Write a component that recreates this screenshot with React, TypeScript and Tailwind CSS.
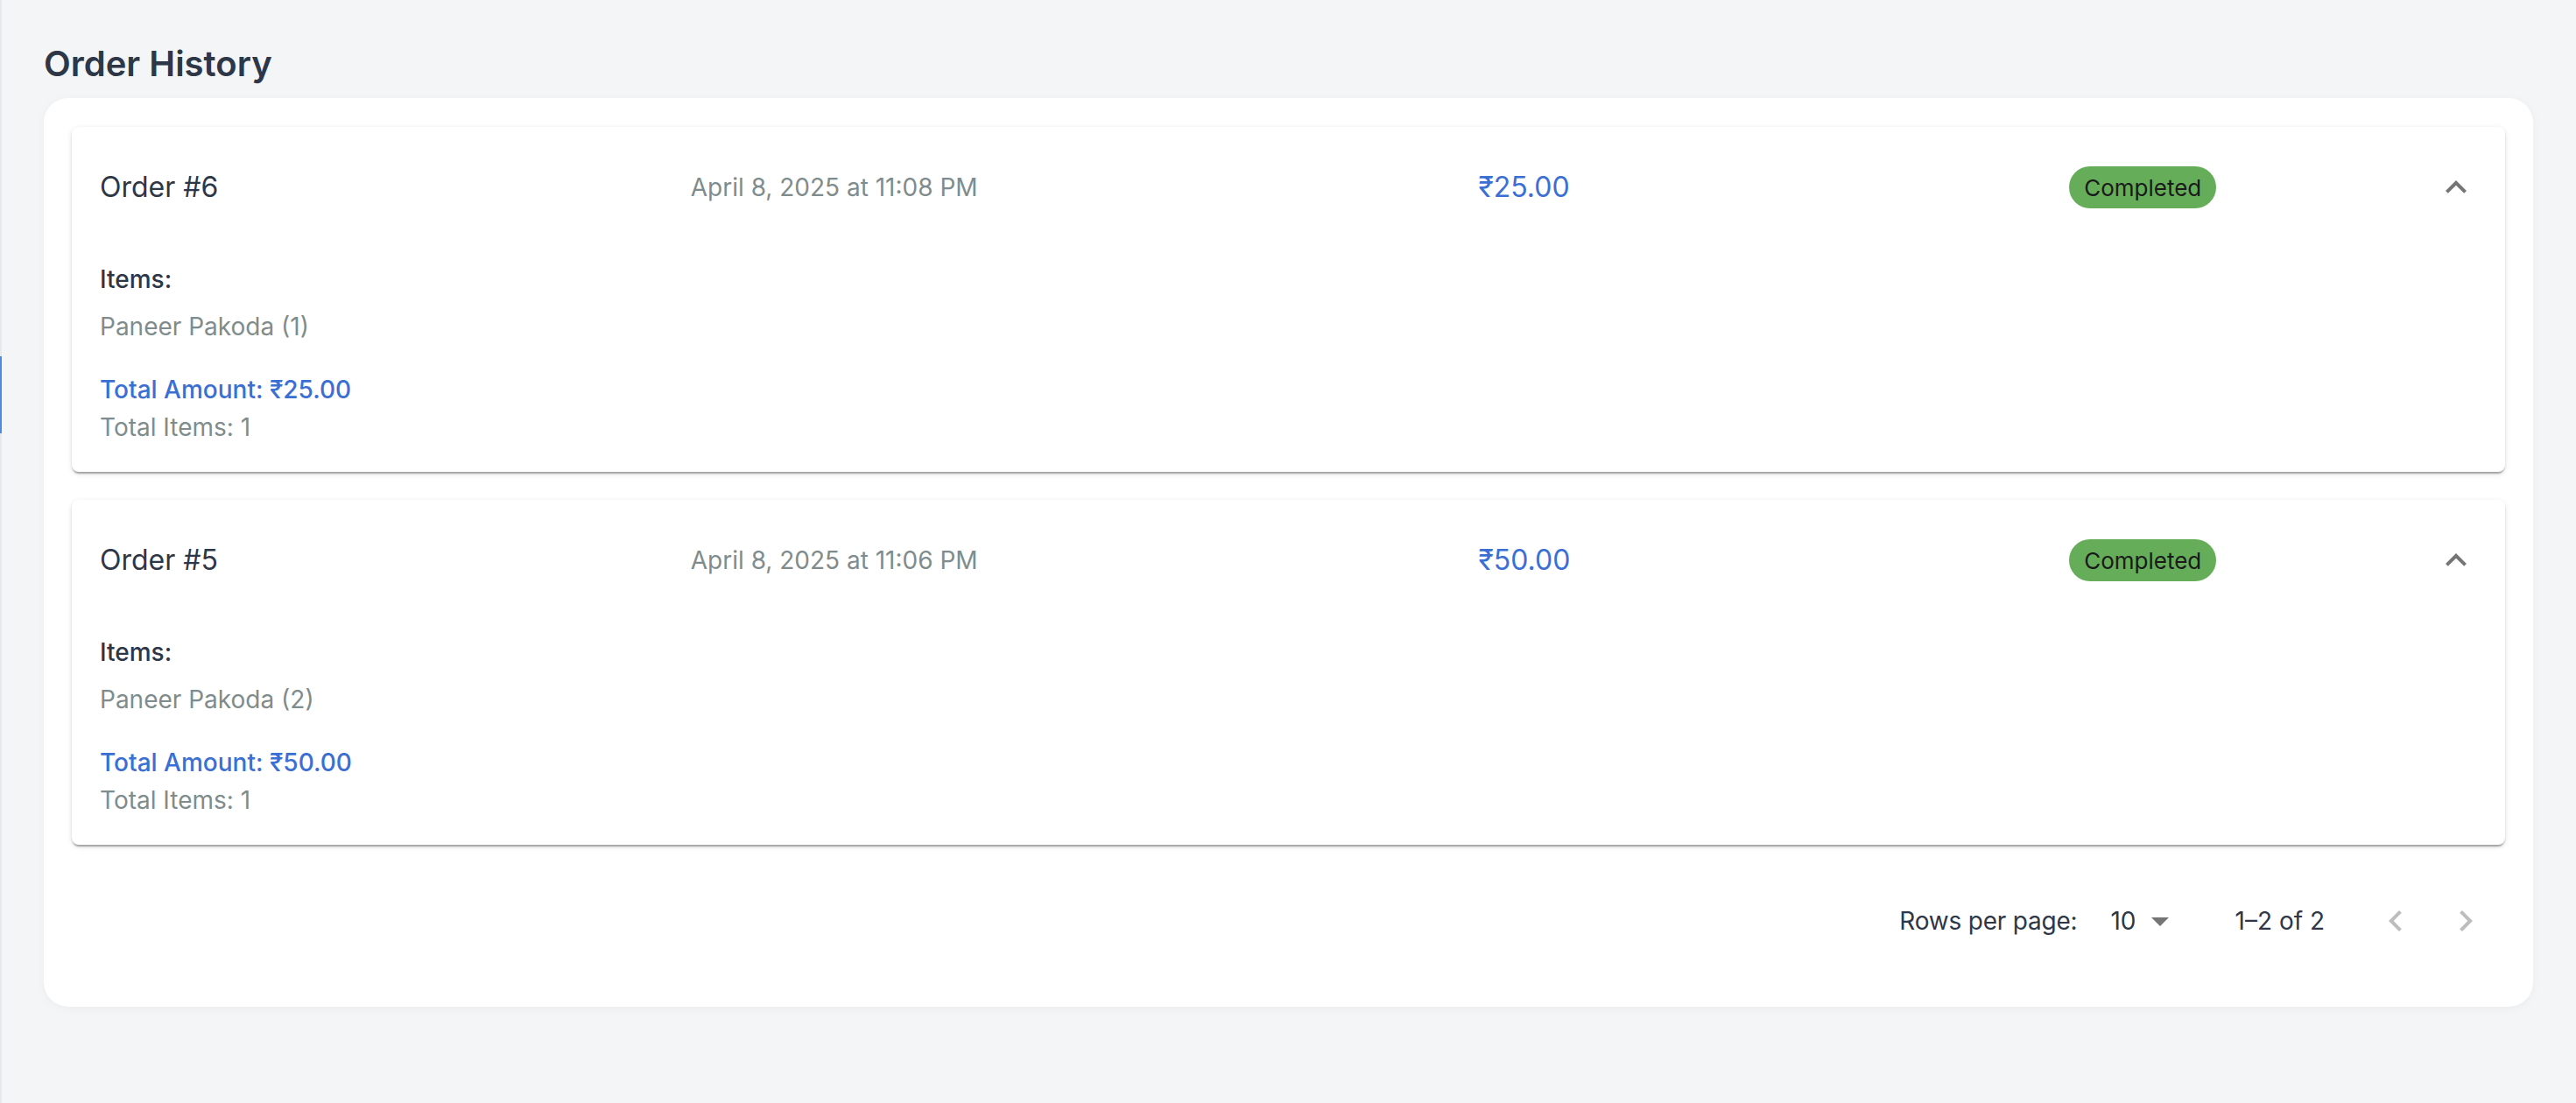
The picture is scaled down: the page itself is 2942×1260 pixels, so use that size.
const font = { fontFamily: 'Inter, "Noto Sans", sans-serif' }

type Order = {
  id: number
  date: string
  total: string
  item: string
  count: number
}

const orders: Order[] = [
  { id: 6, date: 'April 8, 2025 at 11:08 PM', total: '₹25.00', item: 'Paneer Pakoda (1)', count: 1 },
  { id: 5, date: 'April 8, 2025 at 11:06 PM', total: '₹50.00', item: 'Paneer Pakoda (2)', count: 1 },
]

function ExpandLess() {
  return (
    <svg viewBox="0 0 24 24" className="h-[48px] w-[48px] fill-[#757575]">
      <path d="M12 8l-6 6 1.41 1.41L12 10.83l4.59 4.58L18 14z" />
    </svg>
  )
}

function OrderCard({ order }: { order: Order }) {
  return (
    <div className="rounded-lg bg-white shadow-[0_4px_2px_-2px_rgba(0,0,0,0.2),0_2px_2px_0_rgba(0,0,0,0.14),0_2px_6px_0_rgba(0,0,0,0.12)]">
      <div className="flex h-[137px] items-center pl-8 pr-8 pt-px">
        <div className="grid flex-1 grid-cols-12 items-center gap-8">
          <div className="col-span-3 text-[32px] leading-[48px] text-[#2d3748]">Order #{order.id}</div>
          <div className="col-span-4 text-[28px] leading-[48px] text-[#7f8c8d]">{order.date}</div>
          <div className="col-span-3 text-[32px] leading-[48px] text-[#3b6fd4]">{order.total}</div>
          <div className="col-span-2">
            <span className="inline-flex h-[48px] items-center rounded-full bg-[#66ad5a] px-[17px] text-[26px] text-[#1a1a1a]">
              Completed
            </span>
          </div>
        </div>
        <ExpandLess />
      </div>
      <div className="px-8 pt-[17px] pb-[31px] text-[28px] leading-[40px]">
        <div className="font-medium text-[#2d3748]">Items:</div>
        <div className="mt-[14px] text-[#7f8c8d]">{order.item}</div>
        <div className="mt-8 font-medium text-[#3b6fd4]">Total Amount: {order.total}</div>
        <div className="mt-[3px] text-[#7f8c8d]">Total Items: {order.count}</div>
      </div>
    </div>
  )
}

function Pagination() {
  return (
    <div className="mt-[35px] flex h-[104px] items-center justify-end pr-[5px] text-[28px] leading-[40px] text-[#2d3748]">
      <span className="tracking-[-0.2px]">Rows per page:</span>
      <div className="ml-[38px] flex items-center">
        <span>10</span>
        <svg viewBox="0 0 24 24" className="ml-[3px] h-[48px] w-[48px] fill-[#757575]">
          <path d="M7 10l5 5 5-5z" />
        </svg>
      </div>
      <span className="ml-[62px]">1–2 of 2</span>
      <button className="ml-[41px] flex h-[80px] w-[80px] items-center justify-center">
        <svg viewBox="0 0 24 24" className="h-[48px] w-[48px] fill-[#bdbdbd]">
          <path d="M15.41 7.41 14 6l-6 6 6 6 1.41-1.41L10.83 12z" />
        </svg>
      </button>
      <button className="flex h-[80px] w-[80px] items-center justify-center">
        <svg viewBox="0 0 24 24" className="h-[48px] w-[48px] fill-[#bdbdbd]">
          <path d="M10 6 8.59 7.41 13.17 12l-4.58 4.59L10 18l6-6z" />
        </svg>
      </button>
    </div>
  )
}

export default function App() {
  return (
    <div className="flex min-h-[1260px] bg-[#f4f5f7]" style={font}>
      <aside className="w-[2px] shrink-0 bg-[#e8e9ed]">
        <div className="mt-[407px] h-[88px] bg-[#4f8ae0]" />
      </aside>
      <main className="flex-1 pl-12 pr-[49px]">
        <h1 className="mt-[49px] text-[40px] leading-[48px] font-semibold text-[#2d3748]">Order History</h1>
        <section className="mt-[15px] rounded-[28px] bg-white px-8 pt-[33px] pb-[46px] shadow-[0_2px_12px_rgba(0,0,0,0.04)]">
          <div className="flex flex-col gap-8">
            {orders.map((o) => (
              <OrderCard key={o.id} order={o} />
            ))}
          </div>
          <Pagination />
        </section>
      </main>
    </div>
  )
}
